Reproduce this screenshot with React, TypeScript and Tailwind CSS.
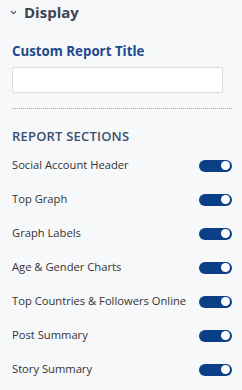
import { ChevronDown } from "lucide-react";

const SECTIONS = [
  "Social Account Header",
  "Top Graph",
  "Graph Labels",
  "Age & Gender Charts",
  "Top Countries & Followers Online",
  "Post Summary",
  "Story Summary",
];

function Toggle() {
  return (
    <div className="flex h-[12px] w-[33px] items-center justify-end rounded-full bg-[#0b3f86] pr-[2px]">
      <div className="h-[9px] w-[9px] rounded-full bg-white" />
    </div>
  );
}

export default function App() {
  return (
    <div
      className="h-[390px] w-[242px] bg-[#f7f8fa] text-[#333]"
      style={{ fontFamily: '"Open Sans", sans-serif' }}
    >
      <div className="flex items-center gap-[6px] pl-[9px] pt-[1px]">
        <ChevronDown className="mt-[1px] h-[9px] w-[9px] text-[#3d4451]" strokeWidth={3} />
        <span className="text-[15px] font-bold text-[#3d4451]">Display</span>
      </div>

      <div className="px-[12px] pt-[18px]">
        <h2 className="text-[13.3px] font-bold leading-[18px] text-[#1e4a8c]">Custom Report Title</h2>
        <input className="mt-[7px] block h-[26px] w-[211px] rounded-[2px] border border-[#dcdcdc] bg-white" />
        <div className="mt-[15px] w-[220px] border-t border-dotted border-[#aaa]" />

        <h3 className="mt-[18px] text-[13px] font-semibold leading-[18px] tracking-[0.2px] text-[#3a4e6e]">
          REPORT SECTIONS
        </h3>

        <div className="mt-[4px] flex w-[220px] flex-col">
          {SECTIONS.map((s) => (
            <div key={s} className="flex h-[34px] items-center justify-between">
              <span className="text-[11.2px]">{s}</span>
              <Toggle />
            </div>
          ))}
        </div>
      </div>
    </div>
  );
}
